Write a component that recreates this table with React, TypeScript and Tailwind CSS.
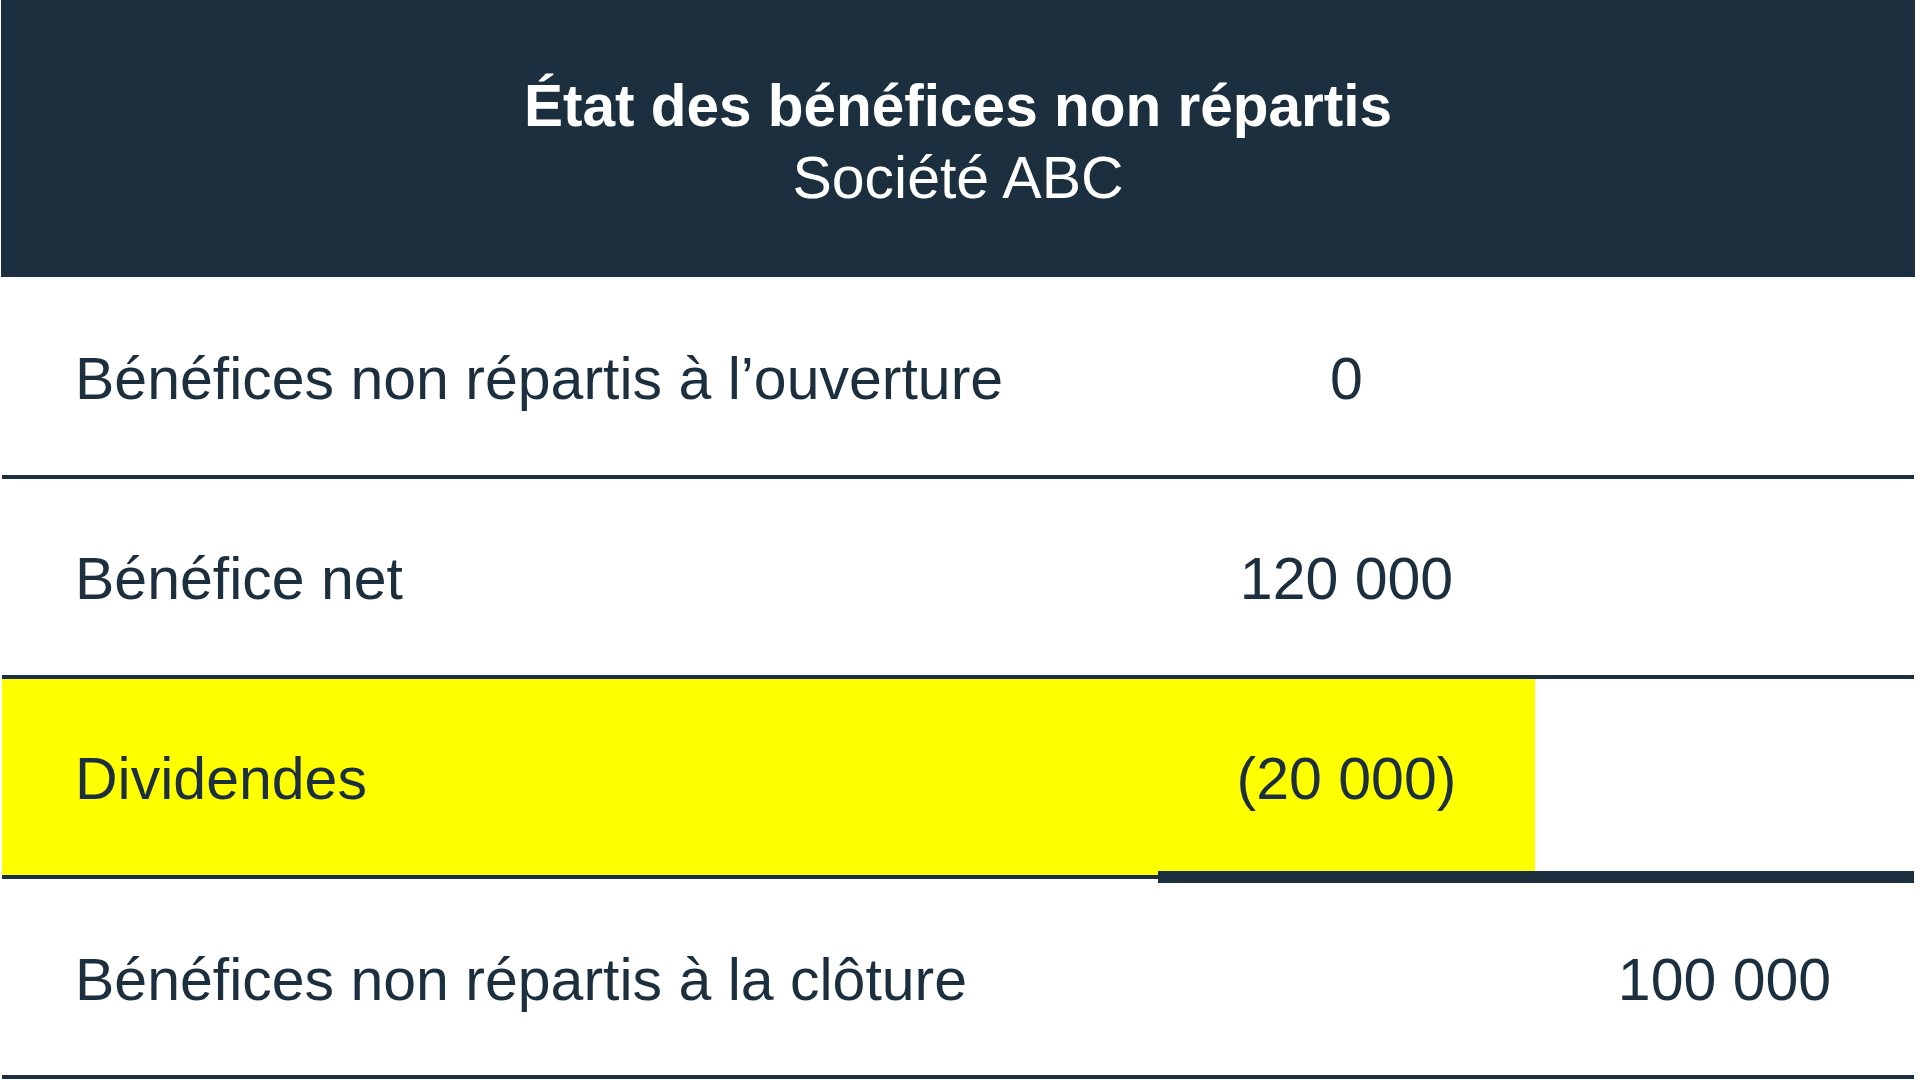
const rows = [
  { label: "Bénéfices non répartis à l’ouverture", mid: "0", right: "" },
  { label: "Bénéfice net", mid: "120 000", right: "" },
];

export default function App() {
  return (
    <div
      className="h-[1080px] w-[1920px] overflow-hidden bg-white text-[#1c2f3e]"
      style={{ fontFamily: '"Liberation Sans", Arial, sans-serif' }}
    >
      <div className="ml-[2px] w-[1912px]">
        {/* Header */}
        <div className="-ml-[1px] flex h-[277px] w-[1914px] flex-col items-center justify-center bg-[#1c2f3e] pt-[7px] text-white">
          <h1 className="text-[58.5px] font-bold leading-[72px]">État des bénéfices non répartis</h1>
          <p className="text-[59px] leading-[72px]">Société ABC</p>
        </div>

        {/* Row 1 */}
        <div className="grid h-[202px] grid-cols-[1156px_377px_379px] border-b-4 border-[#1c2f3e] pt-[6px] text-[59px]">
          <div className="flex items-center pl-[73px]">{rows[0].label}</div>
          <div className="flex items-center justify-center">{rows[0].mid}</div>
          <div />
        </div>

        {/* Row 2 */}
        <div className="grid h-[200px] grid-cols-[1156px_377px_379px] border-b-4 border-[#1c2f3e] pt-[4px] text-[59px]">
          <div className="flex items-center pl-[73px]">{rows[1].label}</div>
          <div className="flex items-center justify-center">{rows[1].mid}</div>
          <div />
        </div>

        {/* Row 3 - highlighted */}
        <div className="grid h-[192px] grid-cols-[1156px_377px_379px] text-[59px]">
          <div className="flex items-center bg-[#ffff00] pl-[73px] pt-[8px]">Dividendes</div>
          <div className="flex items-center justify-center bg-[#ffff00] pt-[8px]">(20 000)</div>
          <div />
        </div>

        {/* subtotal rule */}
        <div className="flex h-[12px]">
          <div className="flex w-[1156px] flex-col">
            <div className="h-[4px] bg-[#ffff00]" />
            <div className="h-[4px] bg-[#1c2f3e]" />
            <div className="h-[4px] bg-white" />
          </div>
          <div className="flex-1 bg-[#1c2f3e]" />
        </div>

        {/* Row 4 */}
        <div className="grid h-[196px] grid-cols-[1156px_377px_379px] border-b-4 border-[#1c2f3e] pt-[3px] text-[59px]">
          <div className="flex items-center pl-[73px]">Bénéfices non répartis à la clôture</div>
          <div />
          <div className="flex items-center justify-center">100 000</div>
        </div>
      </div>
    </div>
  );
}
